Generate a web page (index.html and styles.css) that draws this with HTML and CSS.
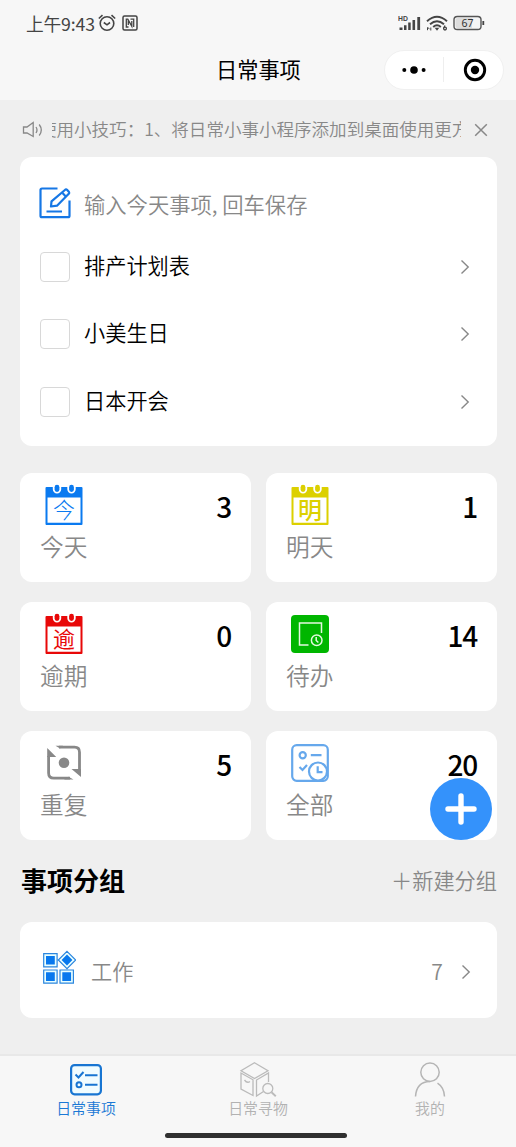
FILE: index.html
```html
<!DOCTYPE html>
<html lang="zh-CN">
<head>
<meta charset="utf-8">
<meta name="viewport" content="width=device-width, initial-scale=1">
<title>日常事项</title>
<link rel="stylesheet" href="styles.css">
</head>
<body>
<svg class="defs" width="0" height="0" aria-hidden="true">
  <symbol id="calendar" viewBox="0 0 40 42">
    <path fill="currentColor" fill-rule="evenodd" d="M2.500 3H8.800V5.200a4.200 4.200 0 0 0 8.400 0V3H23.300V5.200a4.200 4.200 0 0 0 8.400 0V3H37.500a1 1 0 0 1 1 1V40a1 1 0 0 1-1 1H2.500a1 1 0 0 1-1-1V4a1 1 0 0 1 1-1ZM3.500 13.500V38.800H36.500V13.500Z"/>
    <rect x="10.600" y=".8" width="4.800" height="7.200" rx="2.400" fill="currentColor"/>
    <rect x="25.100" y=".8" width="4.800" height="7.200" rx="2.400" fill="currentColor"/>
  </symbol>
  <symbol id="chevron" viewBox="0 0 10 16"><path d="M1.500 1.500 8.200 8l-6.700 6.500" fill="none" stroke="#888" stroke-width="1.400"/></symbol>
</svg>
<div class="app">
  <header class="top">
    <div class="status">
      <span class="clock">上午9:43</span>
      <svg class="alarm" viewBox="0 0 18 18" width="18" height="18" fill="none" stroke="#444" stroke-width="1.600"><circle cx="9" cy="9.500" r="6.800"/><path d="M.8 4.500 4.500 1.200M17.200 4.500 13.500 1.200M5.800 8.500 9 10.800l3-2.300"/></svg>
      <svg class="nfc" viewBox="0 0 16 16" width="16" height="16" fill="none" stroke="#444" stroke-width="1.500"><rect x="1" y="1" width="14" height="14" rx="1.500"/><path d="M6.500 12H4.300V4.200h1.500l4 7V6M8.500 4.200h3.200V12M6.300 5.500V10" stroke-width="1.300"/></svg>
      <svg class="signal" viewBox="0 0 24 16" width="24" height="16" fill="#444"><text x="0" y="5.600" class="hd">HD</text><path d="M1.500 12.500h3V15h-3zM6 10.300h2.500V15H6zM10.200 7.500h2.500V15h-2.500zM14.500 5h2.600v10h-2.600zM19.300 2h2.800v13h-2.800z"/></svg>
      <svg class="wifi" viewBox="0 0 22 16" width="22" height="16" fill="none" stroke="#444" stroke-width="1.900"><path d="M1 6.200Q11-2.800 21 6.200M4 9.300q7-6.300 14 0M7.200 12q3.800-3.600 7.600 0"/><path d="m8.700 12.800 4.600 0-2.300 3z" fill="#444" stroke="none"/><path d="M1.500 15.200V12.500l2 1.300M4.800 15.500v-3" stroke-width="1"/><circle cx="19" cy="13.600" r="1.400" stroke-width="1.300"/><path d="m17.800 13 1.200-2.600" stroke-width="1.200"/></svg>
      <svg class="battery" viewBox="0 0 32 16" width="32" height="16"><rect x="1" y="1.500" width="27" height="13" rx="3.300" fill="#f5f5f5" stroke="#555" stroke-width="1.400"/><path d="M4.500 3H19v10H4.500Q2.500 13 2.500 11V5Q2.500 3 4.500 3" fill="#ddd"/><path d="M30.300 6v4" stroke="#444" stroke-width="1.800"/><text x="14.500" y="11.900" text-anchor="middle" class="charge">67</text></svg>
    </div>
    <div class="nav">
      <h1>日常事项</h1>
      <div class="capsule">
        <svg viewBox="0 0 26 10" width="26" height="10"><circle cx="3.300" cy="5" r="2"/><circle cx="13" cy="5" r="3.800"/><circle cx="22.600" cy="5" r="2"/></svg>
        <i></i>
        <svg viewBox="0 0 24 24" width="24" height="24"><circle cx="12" cy="12" r="9.700" fill="none" stroke="#000" stroke-width="2.900"/><circle cx="12" cy="12" r="4.200"/></svg>
      </div>
    </div>
  </header>

  <div class="notice">
    <svg viewBox="0 0 22 18" width="22" height="18" fill="none" stroke="#888" stroke-width="1.300"><path d="M1.500 6H5l6.200-4.500v14L5 12H1.500ZM14 6q2 3 0 6M17.200 3.500q4.200 5.500 0 11"/></svg>
    <div class="marquee"><span>使用小技巧：1、将日常小事小程序添加到桌面使用更方</span></div>
    <svg viewBox="0 0 14 14" width="14" height="14" fill="none" stroke="#888" stroke-width="1.500"><path d="m1.200 1.200 11.600 11.600M12.800 1.200 1.200 12.800"/></svg>
  </div>

  <main>
    <section class="tasks card">
      <div class="entry">
        <svg viewBox="0 0 32 32" width="32" height="32" fill="none" stroke="#1677e5" stroke-width="2.200"><path d="M18.500 1.500H3Q1.500 1.500 1.500 3V28.700Q1.500 30.200 3 30.200H29Q30.500 30.200 30.500 28.700V13.500"/><path d="M26.500 2.500Q27.300 2 28 2.700L30 5Q30.500 5.800 30 6.500L18 18.700l-6 .8.500-5.200Z" stroke-linejoin="round"/><path d="m23.500 6 3.300 3.500M7.500 24.500H23"/></svg>
        <span>输入今天事项, 回车保存</span>
      </div>
      <div class="task"><b class="check"></b><span>排产计划表</span><svg width="10" height="16"><use href="#chevron"/></svg></div>
      <div class="task"><b class="check"></b><span>小美生日</span><svg width="10" height="16"><use href="#chevron"/></svg></div>
      <div class="task"><b class="check"></b><span>日本开会</span><svg width="10" height="16"><use href="#chevron"/></svg></div>
    </section>

    <section class="stats">
      <div class="stat card"><div class="kind"><svg class="blue" viewBox="0 0 40 42" width="40" height="42"><use href="#calendar"/><text x="20" y="33.500" text-anchor="middle" class="day thin">今</text></svg><span>今天</span></div><strong>3</strong></div>
      <div class="stat card"><div class="kind"><svg class="yellow" viewBox="0 0 40 42" width="40" height="42"><use href="#calendar"/><text x="20" y="34.700" text-anchor="middle" class="day wide">明</text></svg><span>明天</span></div><strong>1</strong></div>
      <div class="stat card"><div class="kind"><svg class="red" viewBox="0 0 40 42" width="40" height="42"><use href="#calendar"/><text x="20" y="34" text-anchor="middle" class="day">逾</text></svg><span>逾期</span></div><strong>0</strong></div>
      <div class="stat card"><div class="kind"><svg viewBox="0 0 40 42" width="40" height="42" fill="none" stroke="#e4f9df" stroke-width="1.500"><rect x="1" y="2" width="38" height="38" rx="4" fill="#00b600" stroke="none"/><path d="M31.500 20V10H9.500V32H18.500"/><circle cx="26.700" cy="27.200" r="5.300"/><path d="M26.200 24v3.500l2.200 2"/></svg><span>待办</span></div><strong>14</strong></div>
      <div class="stat card"><div class="kind"><svg viewBox="0 0 40 42" width="40" height="42" fill="none" stroke="#888" stroke-width="2.800"><path d="M15 5.200H30.500Q35.500 5.200 35.500 10.200V29M4.600 14V31Q4.600 36.200 9.800 36.200H26"/><path d="M3.200 6v9h9ZM37 35V27h-9.500ZM24.500 34.800l5 2.800H20Z M11.500 3.800H19L16 6.600Z" fill="#888" stroke="none"/><circle cx="20" cy="20.800" r="5.300" fill="#888" stroke="none"/></svg><span>重复</span></div><strong>5</strong></div>
      <div class="stat card"><div class="kind"><svg viewBox="0 0 40 42" width="40" height="42" fill="none" stroke="#66a8ec" stroke-width="2.200"><rect x="2.200" y="3.200" width="35.600" height="35.600" rx="4.500"/><circle cx="12.700" cy="13.200" r="3.100"/><path d="M20.800 13.200H31.500M9.500 25l3 3 4.500-5"/><circle cx="28" cy="29.500" r="9" fill="#fff"/><path d="M27.700 24.300v5.800H32.500"/></svg><span>全部</span></div><strong>20</strong>
        <button class="add" aria-label="add"><svg viewBox="0 0 62 62" width="62" height="62"><path d="M31 18V44M18 31H44" stroke="#fff" stroke-width="5.400" stroke-linecap="round"/></svg></button>
      </div>
    </section>

    <div class="grouphead"><h2>事项分组</h2><span>＋新建分组</span></div>
    <section class="group card">
      <svg viewBox="0 0 34 34" width="34" height="34" fill="#0878ee" stroke="#2c86de" stroke-width="1.200"><g fill="#e9ffff"><path d="M1.700 3.700h13.400v13.200H1.700zM1.700 20h13.400v13.200H1.700zM18 20h13.400v13.200H18zM25 1.300l8.700 8.700-8.700 8.700-8.700-8.700z"/></g><path stroke="none" d="M4 6h8.800v8.600H4zM4 22.300h8.800v8.600H4zM20.300 22.300h8.800v8.600h-8.800zM25 4.600l5.400 5.400-5.400 5.400-5.400-5.400z"/></svg>
      <span class="name">工作</span><span>7</span>
      <svg width="10" height="16"><use href="#chevron"/></svg>
    </section>
  </main>

  <footer>
    <nav class="tabs">
      <div class="tab active"><svg viewBox="0 0 36 36" width="36" height="36" fill="none" stroke="#1875d2" stroke-width="2.200"><rect x="3.100" y="3.100" width="29.800" height="29.200" rx="3.500" fill="#f0fcff"/><path d="m7.500 12.500 3 3 5-5.500M17 13.300H29.500M17 22.700H29.500" stroke-width="2"/><circle cx="11" cy="22.700" r="2.500" stroke-width="2"/></svg><span>日常事项</span></div>
      <div class="tab"><svg viewBox="0 0 38 36" width="38" height="36" fill="none" stroke="#bbb" stroke-width="1.300"><path d="M15.500.8 29 8.800l-13.500 7.700L2 8.800ZM2 11v16l12 6.500V17.800ZM24.500 29.500l-7 4.500V18L29.500 11v9M5.500 18q2.500 3.500 5.500 1.500"/><circle cx="28.800" cy="26.500" r="5"/><path d="m32.500 30.300 4.300 4" stroke-width="1.900"/></svg><span>日常寻物</span></div>
      <div class="tab"><svg viewBox="0 0 34 36" width="34" height="36" fill="none" stroke="#b5b5b5" stroke-width="1.500"><circle cx="17" cy="10.300" r="9.200"/><path d="M2.500 34.500Q3.500 19.700 17 19.500M24.500 21.200Q31 25.300 31.500 34.500"/></svg><span>我的</span></div>
    </nav>
    <div class="home"></div>
  </footer>
</div>
</body>
</html>
```

FILE: styles.css
```css
* { box-sizing: border-box; }
body { margin: 0; background: #efefef; font-family: "Noto Sans CJK SC", sans-serif; font-weight: 350; color: #000; }
h1, h2 { margin: 0; }
svg { display: block; flex: none; }
.defs { position: absolute; }
.app { width: 516px; height: 1147px; display: flex; flex-direction: column; overflow: hidden; }
.card { background: #fff; border-radius: 12px; }

.top { height: 100px; background: #f7f7f7; flex: none; }
.status { height: 45px; padding: 0 31px 0 26px; display: flex; align-items: center; color: #444; }
.clock { font-size: 17.700px; font-weight: 400; letter-spacing: -.15px; margin-right: 3px; white-space: nowrap; }
.alarm { margin-right: 6px; }
.signal { margin-left: auto; margin-right: 4px; }
.wifi { margin-right: 5px; }
.hd { font: bold 6.800px "Liberation Sans", sans-serif; }
.charge { font: 10.500px "Noto Sans", sans-serif; fill: #333; }
.nav { height: 49px; padding: 0 12px 0 216px; display: flex; align-items: center; justify-content: space-between; }
.nav h1 { font-size: 21.200px; font-weight: 400; line-height: 47px; margin-top: -2px; }
.capsule { width: 120px; height: 40px; border: 1px solid #f0f0f0; border-radius: 20px; background: #fff; display: flex; align-items: center; padding: 0 16px; justify-content: space-between; }
.capsule i { width: 1px; height: 25px; background: #eee; margin-right: 3px; }

.notice { height: 57px; flex: none; display: flex; align-items: center; padding: 3px 28px 0 22px; color: #888; }
.marquee { width: 409px; margin-left: 8px; margin-right: 13px; margin-top: -2px; overflow: hidden; white-space: nowrap; font-size: 17.550px; line-height: 26px; }
.marquee span { display: block; margin-left: -13px; }

main { padding: 0 19px 0 20px; flex: 1; }
.tasks { height: 289px; padding: 16px 27px 0 19px; }
.entry { height: 60px; display: flex; align-items: center; gap: 13px; color: #888; font-size: 21.300px; }
.task { height: 67.500px; padding-left: 1px; display: flex; align-items: center; font-size: 21.200px; }
.check { width: 30px; height: 30px; border: 1px solid #d8d8d8; border-radius: 4px; }
.task span { flex: 1; margin-left: 14px; margin-top: -5px; }
.stats { display: grid; grid-template-columns: 231px 231px; grid-auto-rows: 109px; gap: 20px 15px; margin-top: 27px; }
.stat { position: relative; display: flex; justify-content: space-between; padding: 11px 20px 0; }
.kind { display: flex; flex-direction: column; color: #888; font-size: 23.700px; line-height: 36px; }
.kind svg { margin-left: 4px; margin-bottom: 2px; }
.stat strong { font-size: 28px; font-weight: 500; line-height: 44px; letter-spacing: -1.200px; }
.stat .add { position: absolute; right: 5px; bottom: 0; width: 62px; height: 62px; padding: 0; border: 0; border-radius: 50%; background: #3492fb; }
.blue { color: #0a7af0; }
.yellow { color: #dcd000; }
.red { color: #e80808; }
.day { font-size: 22px; fill: currentColor; font-weight: 400; }
.thin { font-weight: 300; }
.wide { font-size: 24px; font-weight: 500; }
.grouphead { height: 82px; display: flex; align-items: center; justify-content: space-between; }
.grouphead h2 { font-size: 26px; font-weight: 700; margin-left: 1px; margin-top: -3px; }
.grouphead span { color: #888; font-size: 21.200px; margin-top: -3px; }
.group { height: 96px; padding: 0 26px 0 22px; display: flex; align-items: center; color: #888; font-size: 21.200px; }
.group > svg:first-child { margin-top: -6px; }
.group .name { flex: 1; margin-left: 15px; }
.group > svg:last-child { margin-left: 18px; margin-top: 3px; }

footer { height: 93px; flex: none; background: #f7f7f7; border-top: 2px solid #e8e8e8; }
.tabs { display: grid; grid-template-columns: repeat(3, 1fr); height: 76px; padding-top: 6px; }
.tab { display: flex; flex-direction: column; align-items: center; color: #b2b2b2; font-size: 14.900px; line-height: 20px; }
.tab.active { color: #1b78d5; }
.home { width: 182px; height: 5px; border-radius: 3px; background: #303030; margin: 1px auto 0 165px; }
```
